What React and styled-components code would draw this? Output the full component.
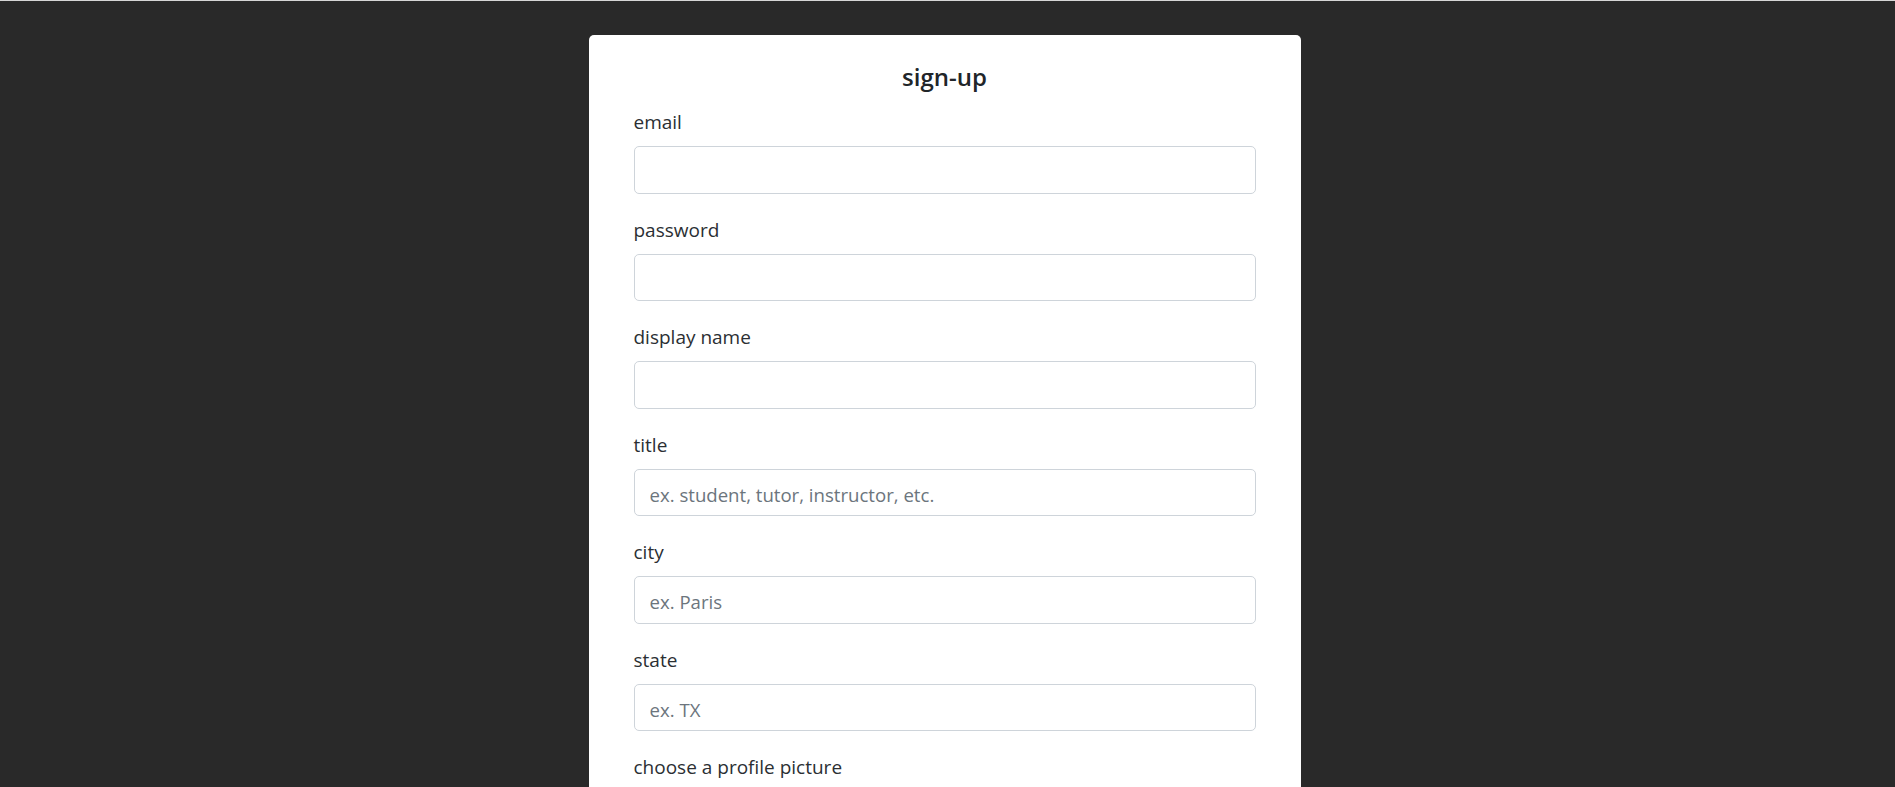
import React from 'react'
import styled, { createGlobalStyle } from 'styled-components'

const GlobalStyle = createGlobalStyle`
  html, body {
    margin: 0;
    padding: 0;
    background: #292929;
  }
  body {
    font-family: "Open Sans", "Noto Sans", sans-serif;
    color: #212529;
  }
`

const fields = [
  { label: 'email', type: 'email' },
  { label: 'password', type: 'password' },
  { label: 'display name', type: 'text' },
  { label: 'title', type: 'text', placeholder: 'ex. student, tutor, instructor, etc.' },
  { label: 'city', type: 'text', placeholder: 'ex. Paris' },
  { label: 'state', type: 'text', placeholder: 'ex. TX' },
]

const SignUp = () => {
  return (
    <Page>
      <GlobalStyle />
      <Card>
        <Title>sign-up</Title>
        <form onSubmit={(e) => e.preventDefault()}>
          {fields.map((field) => (
            <FormGroup key={field.label}>
              <Label>{field.label}</Label>
              <Input type={field.type} placeholder={field.placeholder} />
            </FormGroup>
          ))}
          <FormGroup>
            <Label>choose a profile picture</Label>
            <FileInput type="file" accept="image/*" />
          </FormGroup>
          <SubmitButton type="submit">sign up</SubmitButton>
        </form>
      </Card>
    </Page>
  )
}

export default SignUp

const Page = styled.div`
  min-height: 100vh;
  box-sizing: border-box;
  border-top: 1px solid #d6d6d6;
  padding: 34px 6px 40px 0;
  background: #292929;
`

const Card = styled.div`
  width: 712px;
  box-sizing: border-box;
  margin: 0 auto;
  padding: 27px 45px 30px;
  background: #ffffff;
  border-radius: 5px;
`

const Title = styled.h5`
  margin: 0 0 14px;
  font-size: 24px;
  line-height: 30px;
  font-weight: 600;
  text-align: center;
  color: #212529;
`

const FormGroup = styled.div`
  margin-bottom: 20px;
`

const Label = styled.label`
  display: block;
  padding-top: 1px;
  margin-bottom: 9px;
  font-size: 19px;
  line-height: 30px;
  font-weight: 400;
  color: #2b2f33;
`

const Input = styled.input`
  display: block;
  width: 100%;
  height: 47.5px;
  box-sizing: border-box;
  padding: 9px 15px 5px;
  font-family: inherit;
  font-size: 18.6px;
  color: #495057;
  background: #ffffff;
  border: 1px solid #ced4da;
  border-radius: 5px;
  outline: none;

  &::placeholder {
    color: #6c757d;
    opacity: 1;
  }
`

const FileInput = styled.input`
  display: block;
  font-family: inherit;
  font-size: 18px;
`

const SubmitButton = styled.button`
  padding: 8px 20px;
  font-family: inherit;
  font-size: 20px;
  color: #ffffff;
  background: #007bff;
  border: 1px solid #007bff;
  border-radius: 5px;
`
